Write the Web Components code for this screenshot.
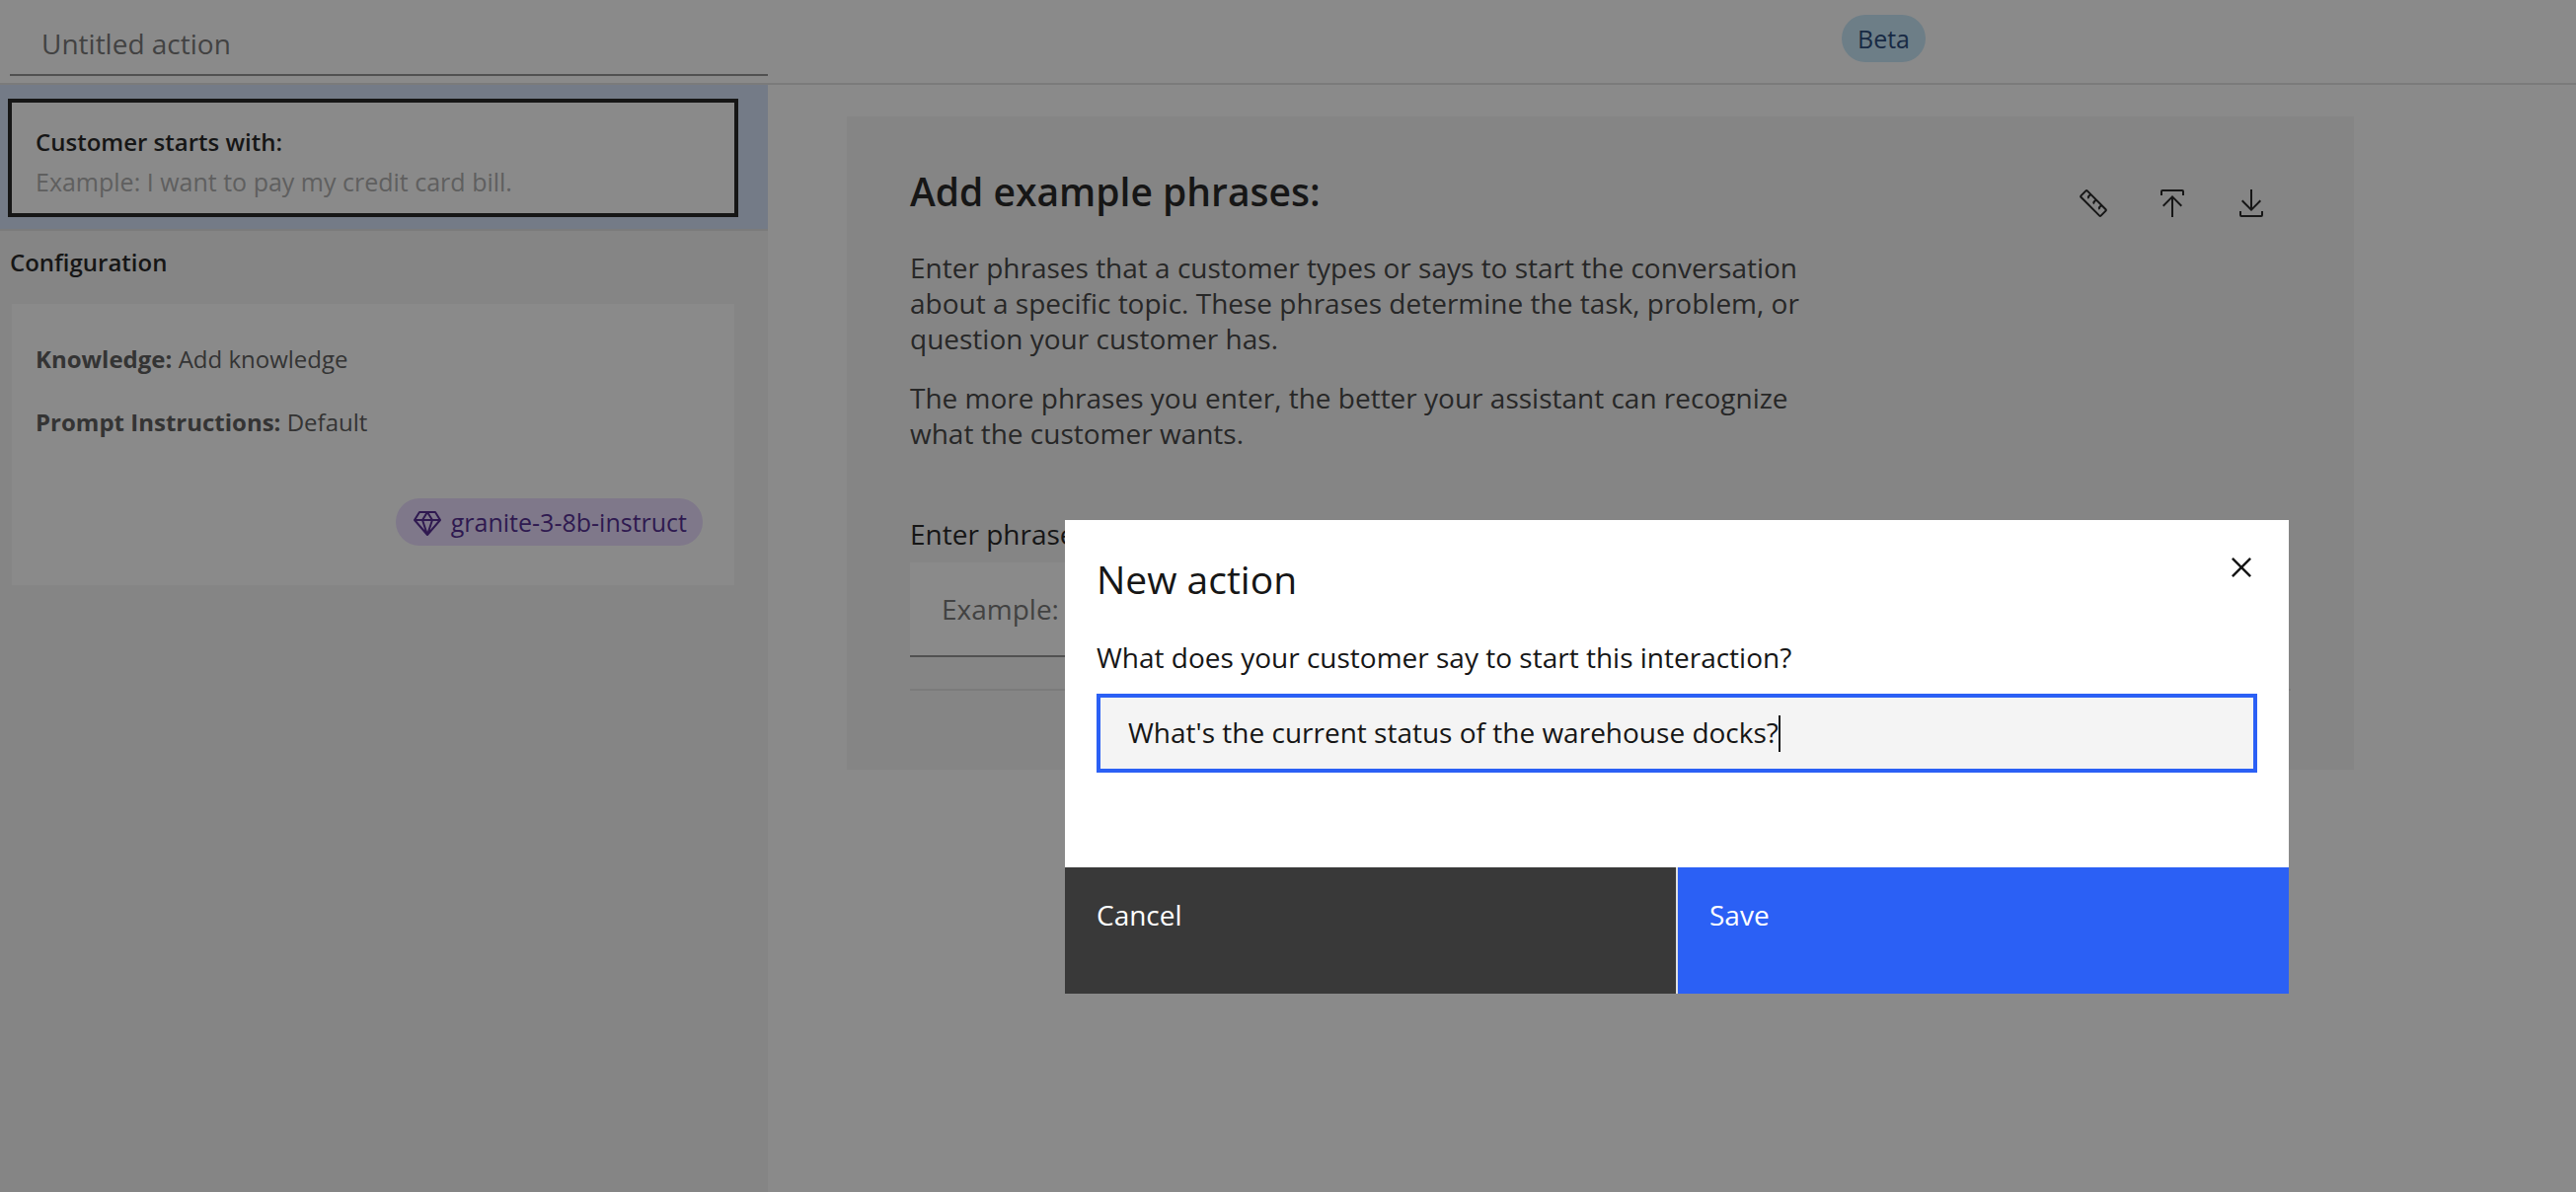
<!DOCTYPE html>
<html lang="en">
<head>
<meta charset="utf-8">
<title>New action</title>
<style>
  html, body { margin: 0; height: 100%; }
  body { font-family: "Open Sans", "Noto Sans", sans-serif; font-size: 28px; line-height: 36px; color: #161616; background: #fff; overflow: hidden; }
</style>
</head>
<body>
<action-editor></action-editor>
<new-action-modal heading="New action"></new-action-modal>
<script>
class BaseElement extends HTMLElement {
  connectedCallback() {
    if (this.shadowRoot) return;
    this.attachShadow({ mode: "open" }).innerHTML =
      `<style>*{box-sizing:border-box}h1,h2,h3,p{margin:0}button,input{font:inherit;color:inherit;border:0;border-radius:0;margin:0;padding:0;background:none;outline:0}button{cursor:pointer}svg{display:block;fill:currentColor}</style>` + this.view();
  }
}

const icons = {
  close: `<path d="M17.4141 16L24 9.4141 22.5859 8 16 14.5859 9.4143 8 8 9.4141 14.5859 16 8 22.5859 9.4143 24 16 17.4141 22.5859 24 24 22.5859z"/>`,
  download: `<path d="M26 24v4H6v-4H4v4a2 2 0 0 0 2 2h20a2 2 0 0 0 2-2v-4zM26 14l-1.41-1.41L17 20.17V2h-2v18.17l-7.59-7.58L6 14l10 10z"/>`,
  upload: `<path d="M6 18l1.41 1.41L15 11.83V30h2V11.83l7.59 7.58L26 18 16 8zM6 8V4h20v4h2V4a2 2 0 0 0-2-2H6a2 2 0 0 0-2 2v4z"/>`,
  ruler: `<g fill="none" stroke="currentColor" stroke-width="2" stroke-linejoin="round"><path d="M8.4 3.4L3.4 8.4a1 1 0 0 0 0 1.4L22.2 28.6a1 1 0 0 0 1.4 0l5-5a1 1 0 0 0 0-1.4L9.8 3.4a1 1 0 0 0-1.4 0z"/><path d="M13 7.2l-2 2q-.6.8.4 1.8M18.5 12.7l-2 2q-.6.8.4 1.8M24 18.2l-2 2q-.6.8.4 1.8"/></g>`,
  gem: `<g fill="none" stroke="currentColor" stroke-width="2" stroke-linejoin="round"><path d="M8 6h16l5 8-13 15L3 14zM3 14h26M16 6l-5 8 5 15 5-15z"/></g>`
};

customElements.define("ui-icon", class extends BaseElement {
  view() {
    const size = this.getAttribute("size") || 32;
    return `<style>:host{display:block}</style><svg width="${size}" height="${size}" viewBox="0 0 32 32" aria-hidden="true">${icons[this.getAttribute("name")]}</svg>`;
  }
});

customElements.define("ui-tag", class extends BaseElement {
  view() {
    return `<style>
      :host{display:inline-flex;align-items:center;gap:8px;height:48px;padding:0 16px;border-radius:24px;font-size:25px;line-height:32px;white-space:nowrap;background:#c4e6f8;color:#1a3e72}
      :host([tone=purple]){background:#e8daff;color:#491d8b}
    </style><slot></slot>`;
  }
});

customElements.define("action-header", class extends BaseElement {
  view() {
    return `<style>
      :host{display:flex;justify-content:space-between;align-items:flex-start;height:86px;padding:0 659px 0 10px;border-bottom:2px solid #e0e0e0;box-sizing:border-box}
      input{width:768px;height:77px;padding:12px 32px 0;border-bottom:2px solid #8d8d8d}
      input::placeholder{color:#6f6f6f;opacity:1}
      ui-tag{margin-top:15px}
    </style>
    <input type="text" placeholder="Untitled action" aria-label="Action name">
    <ui-tag>Beta</ui-tag>`;
  }
});

customElements.define("step-card", class extends BaseElement {
  view() {
    return `<style>
      :host{display:block;padding:14px 30px 12px 8px;background:#d2e0f8;border-bottom:2px solid #e0e0e0;font-size:24px;line-height:40px}
      div{padding:20px 24px 12px;border:4px solid #161616;background:#fff}
      h3{font-size:24px;font-weight:600}
      p{color:#a8a8a8;font-size:25px}
    </style>
    <div><h3><slot name="title"></slot></h3><p><slot></slot></p></div>`;
  }
});

customElements.define("config-card", class extends BaseElement {
  view() {
    return `<style>
      :host{display:block;padding:12px 34px 0 12px;font-size:24px;line-height:40px}
      h3{font-size:24px;font-weight:600;margin:0 0 22px -2px}
      .card{background:#fff;padding:24px 32px 40px 24px;color:#525252;line-height:64px}
      .tags{display:flex;justify-content:flex-end;margin-top:45px}
    </style>
    <h3>Configuration</h3>
    <div class="card">
      <p><b>Knowledge:</b> Add knowledge</p>
      <p><b>Prompt Instructions:</b> Default</p>
      <div class="tags"><ui-tag tone="purple"><ui-icon name="gem"></ui-icon>granite-3-8b-instruct</ui-tag></div>
    </div>`;
  }
});

customElements.define("phrase-panel", class extends BaseElement {
  view() {
    return `<style>
      :host{display:block;background:#f4f4f4;padding:48px 64px 80px}
      header{display:flex;justify-content:space-between;align-items:flex-start}
      h2{font-size:39px;line-height:56px;font-weight:600}
      .tools{display:flex}
      .tools button{width:80px;height:80px;display:grid;place-items:center}
      .copy{display:grid;gap:24px;max-width:920px;margin-top:7px;color:#393939}
      label{display:block;margin:66px 0 11px}
      .entry{padding-right:96px}
      input{display:block;width:100%;height:96px;padding:0 32px;background:#fff;border-bottom:2px solid #8d8d8d}
      input::placeholder{color:#6f6f6f;opacity:1}
      .rule{height:2px;background:#e0e0e0;margin-top:32px}
    </style>
    <header>
      <h2>Add example phrases:</h2>
      <div class="tools">
        <button aria-label="Measure"><ui-icon name="ruler"></ui-icon></button>
        <button aria-label="Upload"><ui-icon name="upload"></ui-icon></button>
        <button aria-label="Download"><ui-icon name="download"></ui-icon></button>
      </div>
    </header>
    <div class="copy">
      <p>Enter phrases that a customer types or says to start the conversation about a specific topic. These phrases determine the task, problem, or question your customer has.</p>
      <p>The more phrases you enter, the better your assistant can recognize what the customer wants.</p>
    </div>
    <label for="phrase">Enter phrase</label>
    <div class="entry"><input id="phrase" type="text" placeholder="Example:"></div>
    <div class="rule"></div>`;
  }
});

customElements.define("action-editor", class extends BaseElement {
  view() {
    return `<style>
      :host{display:flex;flex-direction:column;height:100vh}
      .body{flex:1;display:flex;min-height:0}
      aside{width:778px;flex:none;background:#f4f4f4}
      main{flex:1;padding-top:32px}
      phrase-panel{margin-left:80px;width:calc(100% / 12 * 10);box-sizing:border-box}
    </style>
    <action-header></action-header>
    <div class="body">
      <aside>
        <step-card><span slot="title">Customer starts with:</span>Example: I want to pay my credit card bill.</step-card>
        <config-card></config-card>
      </aside>
      <main><phrase-panel></phrase-panel></main>
    </div>`;
  }
});

customElements.define("new-action-modal", class extends BaseElement {
  view() {
    return `<style>
      :host{position:fixed;inset:0;display:flex;justify-content:flex-end;align-items:flex-start;padding:527px 291px 0 0;background:rgba(22,22,22,.5);box-sizing:border-box}
      dialog{position:static;display:block;margin:0;padding:0;border:0;width:1240px;background:#fff;color:#161616}
      header{display:flex;justify-content:space-between;align-items:flex-start;padding-left:32px}
      h2{font-size:39px;line-height:56px;font-weight:400;margin-top:32px}
      .close{width:96px;height:96px;display:grid;place-items:center}
      .content{padding:25px 32px 96px}
      label{display:block;padding-bottom:19px}
      .field{display:flex;align-items:center;height:80px;padding:0 28px;border:4px solid #2b60f5;background:#f4f4f4}
      .field input{field-sizing:content;height:38px;max-width:100%;padding-bottom:2px;caret-color:transparent}
      .caret{width:2px;height:37px;background:#161616}
      footer{display:grid;grid-template-columns:1fr 1fr;gap:2px;background:#e0e0e0}
      footer button{height:128px;padding:0 32px;text-align:left;color:#fff;background:#393939;display:flex;align-items:flex-start;padding-top:30px}
      footer .primary{background:#2b60f5}
    </style>
    <dialog open aria-labelledby="t">
      <header><h2 id="t">${this.getAttribute("heading")}</h2><button class="close" aria-label="Close"><ui-icon name="close" size="40"></ui-icon></button></header>
      <div class="content">
        <label for="say">What does your customer say to start this interaction?</label>
        <div class="field"><input id="say" type="text" value="What's the current status of the warehouse docks?"><span class="caret"></span></div>
      </div>
      <footer><button>Cancel</button><button class="primary">Save</button></footer>
    </dialog>`;
  }
});
</script>
</body>
</html>
